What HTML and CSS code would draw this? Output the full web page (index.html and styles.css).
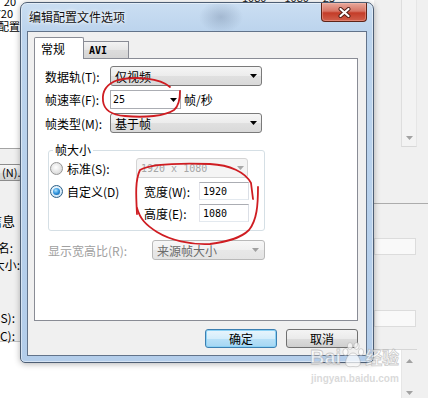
FILE: index.html
```
<!DOCTYPE html>
<html lang="zh-CN">
<head>
<meta charset="utf-8">
<title>编辑配置文件选项</title>
<link rel="stylesheet" href="styles.css">
</head>
<body>
<div class="desk">
  <div class="bg-left">
    <div class="bl-top">
      <div class="bl-line t1">20</div>
      <div class="bl-line t2">720</div>
      <div class="bl-line t3">配置</div>
    </div>
    <div class="bl-panel">
      <div class="bl-btn">(N).</div>
      <div class="bl-line info">信息</div>
      <div class="bl-line name">名:</div>
      <div class="bl-line size">大小:</div>
      <div class="bl-line s">S):</div>
      <div class="bl-line c">C):</div>
    </div>
  </div>
  <div class="bg-mid">
    <div class="mid-top"><span>1080</span><span class="m2">1080</span><span class="m3">25</span></div>
  </div>
  <div class="bg-right">
    <div class="br-top">
      <div class="sp"></div>
      <div class="br-sb"><svg class="tri" width="7" height="4" viewBox="0 0 7 4"><path d="M0 0H7L3.5 4Z"/></svg></div>
    </div>
    <div class="br-sep"></div>
    <div class="br-box b1"></div>
    <div class="br-box b2"></div>
    <div class="br-list">
      <div class="sp2"></div>
      <div class="br-sb2">
        <svg class="tri" width="7" height="4" viewBox="0 0 7 4"><path d="M0 4H7L3.5 0Z"/></svg>
        <svg class="tri" width="7" height="4" viewBox="0 0 7 4"><path d="M0 0H7L3.5 4Z"/></svg>
      </div>
    </div>
  </div>

  <div class="dialog">
    <div class="titlebar">
      <div class="title">编辑配置文件选项</div>
      <div class="close">
        <svg width="13" height="11" viewBox="0 0 13 11"><path d="M2.5 2L10.5 9M10.5 2L2.5 9" stroke="#4a1a12" stroke-width="4" stroke-linecap="round" fill="none"/><path d="M2.5 2L10.5 9M10.5 2L2.5 9" stroke="#fff" stroke-width="2.2" stroke-linecap="round" fill="none"/></svg>
      </div>
    </div>
    <div class="client">
      <div class="tabs">
        <div class="tab active">常规</div>
        <div class="tab avi">AVI</div>
      </div>
      <div class="page">
        <div class="row r1">
          <span class="lbl">数据轨(T):</span>
          <div class="select w152"><span>仅视频</span><svg class="arr" width="7" height="4" viewBox="0 0 7 4"><path d="M0 0H7L3.5 4Z"/></svg></div>
        </div>
        <div class="row r2">
          <span class="lbl">帧速率(F):</span>
          <div class="combo"><span class="num">25</span><svg class="arr" width="7" height="4" viewBox="0 0 7 4"><path d="M0 0H7L3.5 4Z"/></svg></div>
          <span class="unit">帧/秒</span>
        </div>
        <div class="row r3">
          <span class="lbl">帧类型(M):</span>
          <div class="select w152"><span>基于帧</span><svg class="arr" width="7" height="4" viewBox="0 0 7 4"><path d="M0 0H7L3.5 4Z"/></svg></div>
        </div>
        <div class="group">
          <div class="legend">帧大小</div>
          <div class="gb-grid">
            <div class="opt"><span class="radio"></span><span>标准(S):</span></div>
            <div class="combo dis"><span class="num">1920 x 1080</span><svg class="arr" width="7" height="4" viewBox="0 0 7 4"><path d="M0 0H7L3.5 4Z"/></svg></div>
            <div class="opt"><span class="radio on"></span><span>自定义(D)</span></div>
            <div class="dim"><span class="dlbl">宽度(W):</span><div class="tbox"><span class="num">1920</span></div></div>
            <div></div>
            <div class="dim"><span class="dlbl">高度(E):</span><div class="tbox"><span class="num">1080</span></div></div>
          </div>
        </div>
        <div class="row r4">
          <span class="lbl lbl-dis">显示宽高比(R):</span>
          <div class="select sel-dis"><span>来源帧大小</span><svg class="arr" width="7" height="4" viewBox="0 0 7 4"><path d="M0 0H7L3.5 4Z"/></svg></div>
        </div>
      </div>
      <div class="buttons">
        <div class="btn default">确定</div>
        <div class="btn">取消</div>
      </div>
    </div>
  </div>

  <svg class="marks" width="428" height="398" viewBox="0 0 428 398">
    <path d="M170 87 C160 78 135 76 118 80 C106 84 102 92 103 101 C104 110 112 115 125 116 C145 118 165 116 174 110 C179 106 180 100 180 91"/>
    <path d="M137 214 C136 196 135 180 140 170 C150 164 180 163 210 164 C230 165 245 172 251 183 L253 199"/>
    <path d="M258 187 C258 205 257 220 249 230 C240 239 225 242 210 244 C190 245 170 240 157 232 C146 225 140 219 137 208"/>
  </svg>

  <div class="watermark">
    <div class="wm-logo">
      <span class="wm-bai">Bai</span>
      <svg class="paw" width="22" height="26" viewBox="0 0 22 26"><g><ellipse cx="3.5" cy="10" rx="2.6" ry="3.4"/><ellipse cx="8" cy="4" rx="2.6" ry="3.4"/><ellipse cx="14.5" cy="4" rx="2.6" ry="3.4"/><ellipse cx="19" cy="10" rx="2.6" ry="3.4"/><path d="M11 11 C6 11 2.5 19 4 22.5 C5.5 25.5 9 24.5 11 24.5 C13 24.5 16.5 25.5 18 22.5 C19.5 19 16 11 11 11Z"/></g></svg>
      <span class="wm-jy">经验</span>
    </div>
    <div class="wm-url">jingyan.baidu.com</div>
  </div>
</div>
</body>
</html>
```
FILE: styles.css
```
* { box-sizing: border-box; }
body { margin: 0; background: #fff; }

.desk {
  position: relative;
  width: 428px;
  height: 398px;
  overflow: hidden;
  display: flex;
  background: #fff;
  font-family: "Noto Sans CJK SC", "Noto Sans", sans-serif;
  font-size: 12px;
  color: #000;
}

/* ---------- background application ---------- */
.bg-left { width: 20px; flex: none; display: flex; flex-direction: column; overflow: hidden; }
.bl-top { height: 148px; flex: none; font-size: 11px; }
.bl-line { display: flex; justify-content: flex-end; white-space: nowrap; line-height: 12px; flex: none; }
.t1 { margin-top: -5px; padding-right: 4px; }
.t2 { padding-right: 7px; }
.t3 { margin-top: 1px; line-height: 13px; }
.bl-panel {
  flex: none; height: 194px;
  border-top: 1px solid #a3a3a3; border-bottom: 1px solid #c4c4c4;
  background: #f0f0f0;
  display: flex; flex-direction: column;
  font-size: 12px;
}
.bl-btn {
  flex: none; margin-top: 15px; margin-left: -12px; width: 34px; height: 17px;
  border: 1px solid #8c8c8c; border-radius: 3px;
  background: linear-gradient(#f6f6f6, #e6e6e6 50%, #dadada 51%, #d2d2d2);
  font-size: 11px; line-height: 15px; padding-left: 13px; white-space: nowrap;
}
.info { margin-top: 33px; font-size: 13px; line-height: 14px; padding-right: 5px; }
.name { margin-top: 13px; line-height: 14px; padding-right: 7px; }
.size { margin-top: 3px; line-height: 14px; }
.s { margin-top: 40px; padding-right: 5px; }
.c { margin-top: 6px; padding-right: 5px; }

.bg-mid { flex: 1; overflow: hidden; }
.mid-top { display: flex; margin-top: -9px; line-height: 12px; font-size: 11px; padding-left: 222px; white-space: nowrap; color: #222; }
.m2 { margin-left: 18px; }
.m3 { margin-left: 14px; }

.bg-right { width: 54px; flex: none; background: #f0f0f0; display: flex; flex-direction: column; }
.br-top { height: 147px; flex: none; display: flex; }
.sp { width: 27px; }
.br-sb {
  width: 16px; border-left: 1px solid #dedede; border-right: 1px solid #e6e6e6; border-bottom: 1px solid #d8d8d8;
  background: #f3f3f3; display: flex; flex-direction: column; justify-content: flex-end; align-items: center; padding-bottom: 6px;
}
.tri { fill: #a2a2a2; display: block; }
.br-sep { flex: none; margin-top: 56px; border-top: 1px solid #acacac; }
.br-box { flex: none; width: 42px; height: 17px; border: 1px solid #dcdcdc; background: #f9f9f9; }
.b1 { margin-top: 34px; }
.b2 { margin-top: 55px; }
.br-list { flex: 1; margin-top: 22px; width: 43px; display: flex; background: #fff; border-top: 1px solid #d6d6d6; }
.sp2 { width: 27px; }
.br-sb2 {
  width: 16px; background: #f0f0f0; border-left: 1px solid #e6e6e6;
  display: flex; flex-direction: column; justify-content: space-between; align-items: center;
  padding: 9px 0 3px;
}

/* ---------- dialog window ---------- */
.dialog {
  position: absolute; left: 20px; top: 2px; width: 354px; height: 361px;
  border: 1px solid #4d5e74; border-radius: 7px 7px 5px 5px;
  background:
    radial-gradient(ellipse 22px 16px at 200px 14px, rgba(80, 100, 130, .28), rgba(80, 100, 130, 0)),
    linear-gradient(180deg, #cadef2 0, #bcd4ed 28px, #b3cdea 100%);
  box-shadow: inset 0 0 0 1px rgba(255, 255, 255, .45), 0 1px 6px rgba(0, 0, 0, .3);
  padding: 0 6px 6px 6px;
  display: flex; flex-direction: column;
}
.titlebar { height: 28px; flex: none; display: flex; align-items: flex-start; }
.title {
  padding: 6px 0 0 2px; font-size: 12px; line-height: 16px; color: #111;
  text-shadow: 0 0 5px #fff, 0 0 3px #fff;
}
.close {
  margin-left: auto; width: 46px; height: 19px;
  border: 1px solid #5e2418; border-top: none; border-radius: 0 0 4px 4px;
  background: linear-gradient(#e8a99c 0, #d77565 45%, #c43c28 55%, #d0604c 100%);
  box-shadow: inset 0 0 0 1px rgba(255, 200, 190, .35);
  display: flex; align-items: center; justify-content: center;
}
.close svg { display: block; }

.client {
  flex: 1; border: 1px solid #62738a; background: #f0f0f0;
  display: flex; flex-direction: column; padding: 5px 8px 0 6px;
}
.tabs { display: flex; align-items: flex-end; height: 21px; flex: none; }
.tab { border: 1px solid #898c95; border-bottom: none; display: flex; align-items: center; }
.tab.active {
  width: 50px; height: 22px; margin-bottom: -1px; background: #fff;
  position: relative; z-index: 1; padding-left: 6px; border-radius: 2px 2px 0 0;
}
.tab.avi {
  width: 45px; height: 17px; border-left: none; padding-left: 5px;
  background: linear-gradient(#f3f3f3, #e6e6e6 50%, #dcdcdc 51%, #d5d5d5);
  font-family: "DejaVu Sans Mono", monospace; font-weight: bold; font-size: 10px;
}
.page {
  flex: none; height: 263px; border: 1px solid #898c95; background: #fff;
  display: flex; flex-direction: column;
}
.row { display: flex; align-items: center; height: 20px; padding-left: 10px; flex: none; }
.r1 { margin-top: 7px; }
.r2, .r3 { margin-top: 4px; }
.r2 { height: 19px; }
.lbl { width: 65px; flex: none; white-space: nowrap; }
.select {
  height: 20px; border: 1px solid #7a7a7a; border-radius: 3px;
  background: linear-gradient(#f5f5f5, #ececec 50%, #e0e0e0 51%, #d9d9d9);
  display: flex; align-items: center; justify-content: space-between; padding: 0 4px;
}
.w152 { width: 152px; }
.arr { display: block; fill: #000; flex: none; }
.combo {
  width: 71px; height: 19px; border: 1px solid #abadb3; background: #fff;
  display: flex; align-items: center; justify-content: space-between; padding: 0 3px 0 2px;
}
.num { font-family: "DejaVu Sans Mono", monospace; font-size: 10px; white-space: pre; }
.unit { margin-left: 3px; white-space: nowrap; }

.group {
  flex: none; margin: 17px 0 0 13px; width: 217px; height: 81px;
  border: 1px solid #d5dfe5; border-radius: 3px;
  display: flex; flex-direction: column;
}
.legend {
  align-self: flex-start; margin: -8px 0 0 4px; padding: 0 2px; background: #fff;
  line-height: 14px;
}
.gb-grid {
  display: grid; grid-template-columns: 86px 1fr; grid-template-rows: 20px 18px 18px;
  row-gap: 4px; margin-top: 1px; padding-left: 1px;
}
.opt { display: flex; align-items: center; gap: 4px; white-space: nowrap; }
.radio {
  width: 13px; height: 13px; border-radius: 50%; border: 1px solid #969696; flex: none;
  background: radial-gradient(circle at 45% 40%, #fff 0, #e9e9e9 45%, #cdcdcd 100%);
  display: flex; align-items: center; justify-content: center;
}
.radio.on { border-color: #2d5f86; background: radial-gradient(circle at 45% 40%, #fff, #d6ebf9 60%, #a6cbe9); }
.radio.on::after {
  content: ""; width: 7px; height: 7px; border-radius: 50%;
  background: radial-gradient(circle at 40% 35%, #b2e4ff 0, #2f93dc 50%, #0d4d8f 100%);
}
.combo.dis {
  width: 112px; height: 20px; border: 1px solid #d4d4d4; border-radius: 3px;
  background: #f4f4f4; color: #a6a6a6; padding: 0 3px 0 4px;
}
.combo.dis .arr { fill: #a8a8a8; }
.dim { display: flex; align-items: center; padding-left: 8px; }
.dlbl { width: 55px; flex: none; white-space: nowrap; }
.tbox {
  width: 50px; height: 18px; border: 1px solid #abadb3; border-bottom-color: #e3e9ef;
  border-left-color: #e2e3ea; border-right-color: #dbdfe6; background: #fff;
  display: flex; align-items: center; padding-left: 3px;
}
.r4 { margin-top: 9px; padding-left: 13px; }
.lbl-dis { width: 104px; color: #a0a0a0; }
.sel-dis {
  width: 113px; border-color: #b9b9b9; color: #6b6b6b; padding: 0 5px 0 4px;
  background: linear-gradient(#f7f7f7, #f0f0f0 50%, #e8e8e8 51%, #e4e4e4);
}
.sel-dis .arr { fill: #a0a0a0; }

.buttons { display: flex; justify-content: flex-end; gap: 9px; margin-top: 8px; flex: none; }
.btn {
  width: 72px; height: 19px; border: 1px solid #707070; border-radius: 3px;
  background: linear-gradient(#f4f4f4, #ebebeb 50%, #dddddd 51%, #cfcfcf);
  display: flex; align-items: center; justify-content: center;
}
.btn.default {
  border-color: #3c7fb1;
  background: linear-gradient(#e9f5fc, #d4edfb 50%, #b9e1f8 51%, #a5d6f3);
  box-shadow: inset 0 0 0 1px #8cd2f5;
}

/* ---------- annotations overlay ---------- */
.marks { position: absolute; left: 0; top: 0; pointer-events: none; }
.marks path { fill: none; stroke: #cf1d22; stroke-width: 1.8; stroke-linecap: round; stroke-linejoin: round; }

.watermark { position: absolute; left: 310px; top: 342px; pointer-events: none; }
.wm-logo { display: flex; align-items: flex-end; gap: 1px; }
.wm-bai, .wm-jy {
  color: rgba(255, 255, 255, .7);
  -webkit-text-stroke: .8px rgba(150, 150, 150, .5);
  font-weight: bold;
}
.wm-bai { font-family: "Liberation Sans", sans-serif; font-size: 20px; line-height: 22px; }
.wm-jy { font-size: 17px; line-height: 22px; }
.paw g { fill: rgba(255, 255, 255, .7); stroke: rgba(150, 150, 150, .5); stroke-width: .8; }
.paw { display: block; }
.wm-url {
  font-family: "Liberation Sans", sans-serif; font-size: 10px; font-weight: bold;
  color: rgba(205, 205, 205, .75); margin-top: 6px; line-height: 10px; padding-left: 1px;
}
```
